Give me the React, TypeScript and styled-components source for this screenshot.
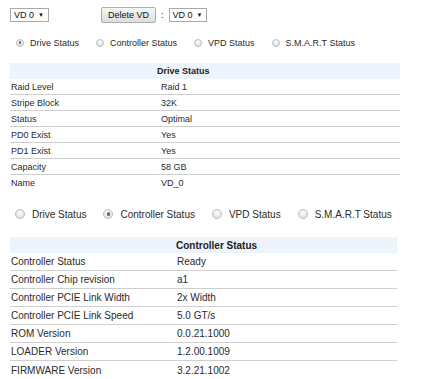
import styled, { createGlobalStyle } from 'styled-components';

const GlobalStyle = createGlobalStyle`
  html, body {
    margin: 0;
    padding: 0;
    background: #ffffff;
  }
  body {
    font-family: "Liberation Sans", Arial, sans-serif;
    color: #222;
  }
`;

const Page = styled.div`
  width: 428px;
  height: 379px;
  overflow: hidden;
  display: flex;
  flex-direction: column;
`;

const Toolbar = styled.div`
  display: flex;
  align-items: center;
  height: 30px;
  padding-left: 10px;
  font-size: 9px;
`;

const Select = styled.div`
  display: flex;
  align-items: center;
  gap: 4px;
  height: 14px;
  padding: 0 4px 0 3px;
  border: 1px solid #a9a9a9;
  background: #fff;
  color: #111;
  box-sizing: border-box;
  &::after {
    content: '▼';
    font-size: 6px;
  }
`;

const Button = styled.div`
  display: flex;
  align-items: center;
  height: 16px;
  padding: 0 6px;
  margin-left: 52px;
  border: 1px solid #adadad;
  border-radius: 2px;
  background: linear-gradient(#f6f6f6, #dddddd);
  color: #111;
  box-sizing: border-box;
`;

const Colon = styled.span`
  margin: 0 5px;
  color: #111;
`;

const RadioRow = styled.div<{ $size: number; $gap: number; $height: number; $pad: number }>`
  display: flex;
  align-items: center;
  height: ${(p) => p.$height}px;
  padding-left: ${(p) => p.$pad}px;
  gap: ${(p) => p.$gap}px;
  font-size: ${(p) => p.$size}px;
  color: #2a2a2a;
`;

const RadioItem = styled.label<{ $dot: number; $space: number }>`
  display: flex;
  align-items: center;
  gap: ${(p) => p.$space}px;
  --dot: ${(p) => p.$dot}px;
`;

const Radio = styled.span<{ $checked?: boolean }>`
  position: relative;
  width: var(--dot);
  height: var(--dot);
  border-radius: 50%;
  border: 1px solid #bcbcbc;
  background: radial-gradient(circle at 50% 35%, #ffffff, #d6d6d6);
  box-sizing: border-box;
  &::after {
    content: '';
    display: ${(p) => (p.$checked ? 'block' : 'none')};
    position: absolute;
    inset: 28%;
    border-radius: 50%;
    background: #666;
  }
`;

const Table = styled.div<{ $width: number; $size: number; $row: number; $label: number; $top: number }>`
  width: ${(p) => p.$width}px;
  margin: ${(p) => p.$top}px 0 0 10px;
  font-size: ${(p) => p.$size}px;
  --row: ${(p) => p.$row}px;
  --label: ${(p) => p.$label}px;
`;

const Header = styled.div<{ $height: number; $indent: number }>`
  display: flex;
  align-items: center;
  height: ${(p) => p.$height}px;
  padding-left: ${(p) => p.$indent}px;
  background: #eef4fd;
  font-weight: bold;
  color: #222;
`;

const Row = styled.div<{ $last?: boolean }>`
  display: grid;
  grid-template-columns: var(--label) 1fr;
  align-items: center;
  height: var(--row);
  box-sizing: border-box;
  border-bottom: ${(p) => (p.$last ? 'none' : '1px solid #cfcfcf')};
  color: #2a2a2a;
`;

const Cell = styled.span`
  padding-left: 1px;
  white-space: nowrap;
`;

const tabs = ['Drive Status', 'Controller Status', 'VPD Status', 'S.M.A.R.T Status'];

const driveRows: [string, string][] = [
  ['Raid Level', 'Raid 1'],
  ['Stripe Block', '32K'],
  ['Status', 'Optimal'],
  ['PD0 Exist', 'Yes'],
  ['PD1 Exist', 'Yes'],
  ['Capacity', '58 GB'],
  ['Name', 'VD_0'],
];

const controllerRows: [string, string][] = [
  ['Controller Status', 'Ready'],
  ['Controller Chip revision', 'a1'],
  ['Controller PCIE Link Width', '2x Width'],
  ['Controller PCIE Link Speed', '5.0 GT/s'],
  ['ROM Version', '0.0.21.1000'],
  ['LOADER Version', '1.2.00.1009'],
  ['FIRMWARE Version', '3.2.21.1002'],
];

type TabsProps = {
  checked: number;
  size: number;
  gap: number;
  height: number;
  pad: number;
  dot: number;
  space: number;
};

function StatusTabs(props: TabsProps) {
  return (
    <RadioRow $size={props.size} $gap={props.gap} $height={props.height} $pad={props.pad}>
      {tabs.map((t, i) => (
        <RadioItem key={t} $dot={props.dot} $space={props.space}>
          <Radio $checked={i == props.checked} />
          {t}
        </RadioItem>
      ))}
    </RadioRow>
  );
}

export default function App() {
  return (
    <Page>
      <GlobalStyle />
      <Toolbar>
        <Select>VD 0</Select>
        <Button>Delete VD</Button>
        <Colon>:</Colon>
        <Select>VD 0</Select>
      </Toolbar>

      <StatusTabs checked={0} size={9} gap={17} height={26} pad={16} dot={8} space={6} />

      <Table $width={390} $size={9} $row={16} $label={150} $top={8}>
        <Header $height={16} $indent={147}>Drive Status</Header>
        {driveRows.map(([k, v], i) => (
          <Row key={k} $last={i == driveRows.length - 1}>
            <Cell>{k}</Cell>
            <Cell>{v}</Cell>
          </Row>
        ))}
      </Table>

      <StatusTabs checked={1} size={10} gap={17} height={46} pad={15} dot={10} space={7} />

      <Table $width={387} $size={10} $row={18} $label={166} $top={0}>
        <Header $height={16} $indent={166}>Controller Status</Header>
        {controllerRows.map(([k, v], i) => (
          <Row key={k} $last={i == controllerRows.length - 1}>
            <Cell>{k}</Cell>
            <Cell>{v}</Cell>
          </Row>
        ))}
      </Table>
    </Page>
  );
}
